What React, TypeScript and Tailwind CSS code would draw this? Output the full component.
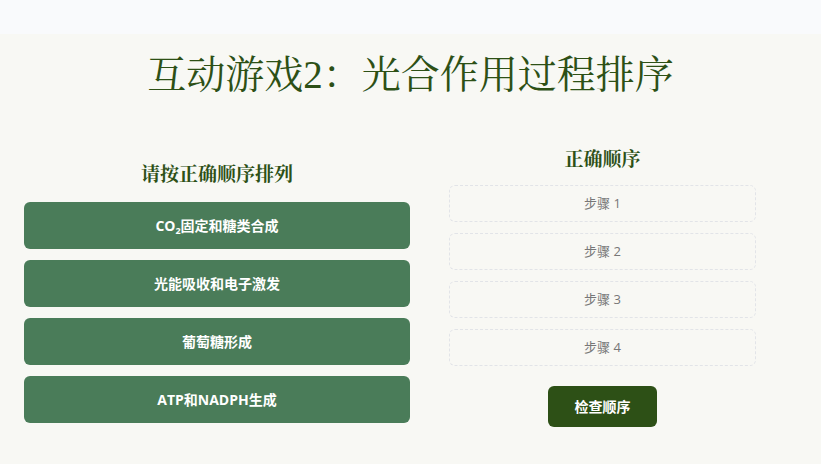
const slots = ["步骤 1", "步骤 2", "步骤 3", "步骤 4"];

const serif = "font-['Liberation_Serif','Noto_Serif_CJK_SC','Noto_Sans_CJK_SC',serif]";

function Item({ children }: { children: React.ReactNode }) {
  return (
    <div className="h-[47px] rounded-[6px] bg-[#4a7c59] text-white font-bold text-[14px] flex items-center justify-center">
      {children}
    </div>
  );
}

export default function App() {
  return (
    <div className="w-[821px] h-[464px] overflow-hidden bg-[#f8f8f4] font-['Open_Sans','Noto_Sans_CJK_SC',sans-serif]">
      <div className="h-[34px] bg-[#f9fafc]" />
      <h1 className={`${serif} text-[39px] leading-none text-center text-[#2d5016] pt-[21px]`}>
        互动游戏2：光合作用过程排序
      </h1>
      <div className="flex items-start pl-[24px] pt-[54px] gap-[39px]">
        <div className="w-[386px] flex flex-col mt-[15px]">
          <h2 className={`${serif} font-bold text-[19px] leading-[24px] text-center text-[#2d5016] mb-[15px]`}>
            请按正确顺序排列
          </h2>
          <div className="flex flex-col gap-[11px]">
            <Item>
              <span>
                CO<sub className="text-[9px] align-baseline relative top-[3px]">2</sub>固定和糖类合成
              </span>
            </Item>
            <Item>光能吸收和电子激发</Item>
            <Item>葡萄糖形成</Item>
            <Item>ATP和NADPH生成</Item>
          </div>
        </div>
        <div className="w-[307px] flex flex-col items-center">
          <h2 className={`${serif} font-bold text-[19px] leading-[24px] text-center text-[#2d5016] mb-[13px]`}>
            正确顺序
          </h2>
          <div className="w-full flex flex-col gap-[11px]">
            {slots.map((s) => (
              <div
                key={s}
                className="h-[37px] rounded-[6px] border border-dashed border-[#e2e4e8] flex items-center justify-center text-[13px] text-[#777]"
              >
                {s}
              </div>
            ))}
          </div>
          <button className="mt-[20px] w-[109px] h-[41px] rounded-[6px] bg-[#2d5016] text-white font-bold text-[14px]">
            检查顺序
          </button>
        </div>
      </div>
    </div>
  );
}
